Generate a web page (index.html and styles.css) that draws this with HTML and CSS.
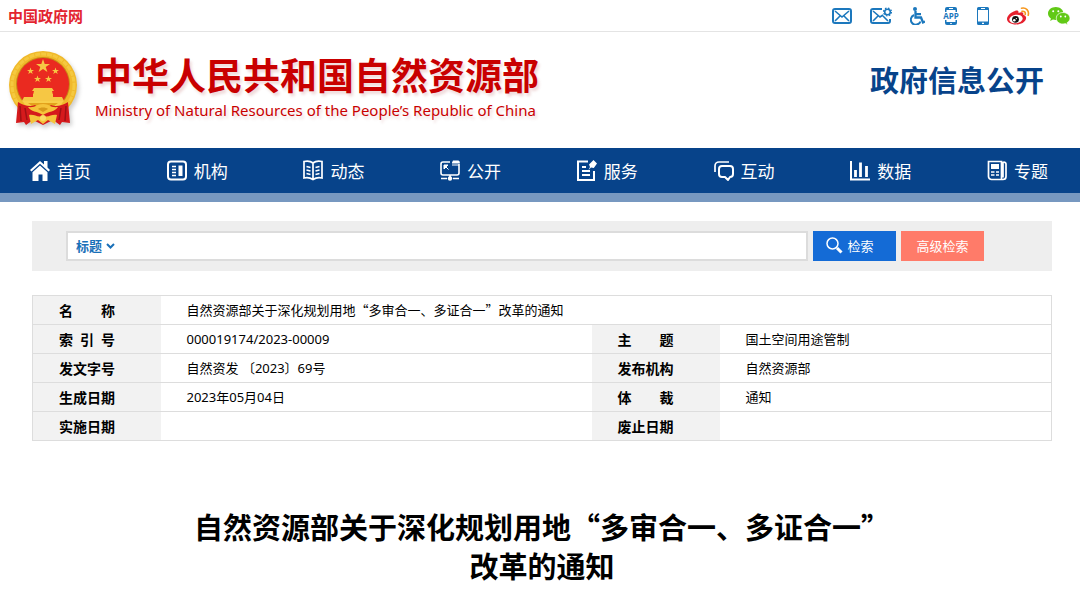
FILE: index.html
```html
<!DOCTYPE html>
<html lang="zh-CN">

<head>
    <meta charset="utf-8">
    <meta name="viewport" content="width=device-width, initial-scale=1">
    <title>自然资源部关于深化规划用地“多审合一、多证合一”改革的通知</title>
    <link rel="stylesheet" href="styles.css">
</head>

<body>
    <div class="topbar">
        <a class="gov-link" href="#">中国政府网</a>
        <div class="tools">
            <a href="#" aria-label="邮箱">
                <svg width="20" height="16" viewBox="0 0 20 16" fill="none" stroke="#1c78bd" stroke-width="2">
                    <rect x="1" y="1" width="18" height="14" rx="2" />
                    <path d="M3 3l7 6 7-6M3 13l5-5M17 13l-5-5" stroke-width="1.6" />
                </svg>
            </a>
            <a href="#" aria-label="邮件订阅">
                <svg width="22" height="17" viewBox="0 0 22 17" fill="none" stroke="#1c78bd" stroke-width="2">
                    <path d="M12 2H3a2 2 0 0 0-2 2v10a2 2 0 0 0 2 2h15a2 2 0 0 0 2-2v-2" />
                    <path d="M3 4l7 6 3-2M3 14l5-5M18 14l-5-5" stroke-width="1.6" />
                    <circle cx="17.5" cy="5" r="2.8" stroke-width="1.6" />
                    <circle cx="17.5" cy="5" r="3.9" stroke-width="1.3" stroke-dasharray="1.6 1.46" />
                </svg>
            </a>
            <a href="#" aria-label="无障碍">
                <svg width="15" height="18" viewBox="0 0 15 18" fill="none" stroke="#1c78bd" stroke-width="2">
                    <circle cx="5" cy="2" r="2" fill="#1c78bd" stroke="none" />
                    <path d="M5.500 4v6.500H11l2 5 2-1M6 7.200h5" stroke-width="2.300" />
                    <path d="M4 8a5 5 0 1 0 6.500 6.500" />
                </svg>
            </a>
            <a href="#" aria-label="APP">
                <svg width="16" height="18" viewBox="0 0 16 18" fill="#1c78bd">
                    <path d="M2 5V2a2 2 0 0 1 2-2h8a2 2 0 0 1 2 2v3h-1.500V3h-9v2zM2 13h1.500v2h9v-2H14v3a2 2 0 0 1-2 2H4a2 2 0 0 1-2-2z" />
                    <text x="8" y="12" text-anchor="middle" class="app-text">APP</text>
                    <path d="M6 1h4v1H6zM7.200 16h1.600v1H7.200z" fill="#fff" />
                </svg>
            </a>
            <a href="#" aria-label="手机版">
                <svg width="12" height="18" viewBox="0 0 12 18" fill="#1c78bd">
                    <path fill-rule="evenodd" d="M1.500 0h9A1.500 1.500 0 0 1 12 1.500v15a1.500 1.500 0 0 1-1.500 1.500h-9A1.500 1.500 0 0 1 0 16.500v-15A1.500 1.500 0 0 1 1.500 0zM1 3v11.500h10V3z" />
                    <path d="M4 1h4v1H4zM5 15.700h2v1.200H5z" fill="#fff" />
                </svg>
            </a>
            <a href="#" aria-label="微博">
                <svg width="23" height="18" viewBox="0 0 23 18">
                    <path d="M8 4c2-1 4-.5 3.500 2 3-1.300 5.500-.7 4.700 1.700 2 .6 3.300 2 2.800 4C18.300 15 14 17.500 9 17.500c-5 0-9-2.300-9-5.500C0 8.500 4.500 5 8 4z" fill="#e6202e" />
                    <ellipse cx="9" cy="12" rx="6.700" ry="4.300" fill="#fff" transform="rotate(-8 9 12)" />
                    <circle cx="8.500" cy="12.300" r="3.400" fill="#111" />
                    <circle cx="7.300" cy="13.200" r="1.300" fill="#fff" />
                    <circle cx="9.400" cy="11.600" r=".7" fill="#fff" />
                    <path d="M14.500 1.200c4.500-1 8 2.500 6.700 7M15 4.300c2.200-.5 3.800 1.100 3.200 3.200" fill="none" stroke="#f7971d" stroke-width="1.600" stroke-linecap="round" />
                </svg>
            </a>
            <a href="#" aria-label="微信">
                <svg width="22" height="18" viewBox="0 0 22 18" fill="#61c916">
                    <path d="M7.800 0C3.500 0 0 2.800 0 6.400c0 2 1.100 3.800 2.900 5L2.200 14l2.700-1.400c1 .3 1.900.4 2.900.4 4.300 0 7.700-2.900 7.700-6.500S12.100 0 7.800 0z" />
                    <path d="M15 5.500c-3.900 0-6.700 2.500-6.700 5.700S11.100 17 15 17c.8 0 1.600-.1 2.300-.4l2.300 1.300-.6-2.100c1.800-1.100 3-2.700 3-4.600 0-3.200-3.200-5.700-7-5.700z" stroke="#fff" stroke-width=".7" />
                    <g fill="#fff">
                        <circle cx="5.200" cy="4.300" r="1" />
                        <circle cx="10.300" cy="4.300" r="1" />
                        <circle cx="12.800" cy="9.500" r=".9" />
                        <circle cx="17.300" cy="9.500" r=".9" />
                    </g>
                </svg>
            </a>
        </div>
    </div>

    <header class="header">
        <a class="brand" href="#">
            <svg class="emblem" width="70" height="76" viewBox="0 0 70 76">
                <circle cx="35" cy="35" r="34" fill="#f0b92b" />
                <circle cx="35" cy="35" r="31" fill="none" stroke="#f5c93f" stroke-width="3" stroke-dasharray="5 1" />
                <circle cx="35" cy="34" r="27" fill="#c98a16" />
                <circle cx="35" cy="34" r="26" fill="#ea2a20" />
                <g fill="#f6c744">
                    <path id="star" d="M35 9l1.700 5h5.300l-4.300 3.100 1.700 5-4.400-3.100-4.400 3.100 1.700-5L28 14h5.300z" />
                    <use href="#star" transform="translate(5 13) scale(.5)" />
                    <use href="#star" transform="translate(30 13) scale(.5)" />
                    <use href="#star" transform="translate(12 21) scale(.5)" />
                    <use href="#star" transform="translate(23 21) scale(.5)" />
                    <path d="M26 38h18l2 3H24zM26 41h18l1 4H25zM25 44h20v3H25zM16 47h38l2 4H14z" />
                </g>
                <path d="M14 51h42l-4 5H18z" fill="#f8ce49" />
                <path d="M20 53h30l-4 3H24z" fill="#e3a21c" />
                <path d="M10 52c6 4 13 5 17 3l8 7 8-7c4 2 11 1 17-3l2 21-8-1-2 3-7-5-10 5-10-5-7 5-2-3-8 1z" fill="#d51a1c" />
                <path d="M12 56l1 15M17 58l2 12M58 56l-1 15M53 58l-2 12" stroke="#9f1115" stroke-width="1.500" />
                <path d="M20 57c8 1 8-3 15-3s7 4 15 3c-3 5-9 4-15 8-6-4-12-3-15-8z" fill="#f5c33a" />
                <path d="M30 59c2-2 8-2 10 0l-5 3z" fill="#d89a1a" />
                <path d="M21 65c6-1 8 3 14 1 6 2 8-2 14-1l-2 9-7-4-5 4-5-4-7 4z" fill="#f4c53c" />
                <circle cx="35" cy="68" r="3" fill="#f9dc66" />
            </svg>
            <span class="brand-text">
                <strong>中华人民共和国自然资源部</strong>
                <span class="brand-en">Ministry of Natural Resources of the People’s Republic of China</span>
            </span>
        </a>
        <a class="section-name" href="#">政府信息公开</a>
    </header>

    <nav class="nav">
        <a href="#">
            <svg width="20" height="21" viewBox="0 0 20 21" fill="#fff">
                <path d="M10 1l4 3.500V1h3.500v6.500L20 10l-1.500 1.500L10 3.800l-8.500 7.700L0 10z" />
                <path d="M10 5.500l7.500 6.700V21H12.500v-6.500h-4V21h-6v-8.800z" />
            </svg>
            首页
        </a>
        <a href="#">
            <svg width="20" height="21" viewBox="0 0 20 21" fill="none" stroke="#fff" stroke-width="2">
                <rect x="1" y="1.500" width="18" height="18" rx="3" />
                <path d="M5 6.500h4M5 9.500h4M5 12.500h4M5 15.500h4" stroke-width="1.500" />
                <path d="M13.500 5.500v10.500" stroke-width="4" />
            </svg>
            机构
        </a>
        <a href="#">
            <svg width="20" height="21" viewBox="0 0 20 21" fill="none" stroke="#fff" stroke-width="1.700">
                <path d="M10 3C7.500 1 4 .8 1 1.500v16.500c3-.7 6-.5 9 1.500 3-2 6-2.200 9-1.500V1.500C16 .8 12.500 1 10 3zM10 3v16" />
                <path d="M3.500 6.500l4 1M3.500 10l4 1M3.500 13.500l4 1M16.500 6.500l-4 1M16.500 10l-4 1M16.500 13.500l-4 1" stroke-width="1.500" />
            </svg>
            动态
        </a>
        <a href="#">
            <svg width="20" height="21" viewBox="0 0 20 21" fill="none" stroke="#fff" stroke-width="1.600">
                <path d="M10 2H3a2 2 0 0 0-2 2v9a2 2 0 0 0 2 2h14a2 2 0 0 0 2-2V4M10 15v3M1 18.500h6M13 18.500h6" />
                <path d="M12 2.500l1-2h5.500l1.300 1.200V3.500H12z" fill="#fff" stroke="none" />
                <path d="M12 5h7" stroke-width="1" />
                <path d="M4 9V5h4zM5.500 6.500l3 3" fill="#fff" stroke-width="1" />
                <circle cx="10" cy="18.500" r="2.200" fill="#fff" stroke="none" />
            </svg>
            公开
        </a>
        <a href="#">
            <svg width="20" height="21" viewBox="0 0 20 21" fill="none" stroke="#fff" stroke-width="2">
                <path d="M11 1.500H1v18.500h16V11" />
                <path d="M5 7h4M5 11h8M5 15h8" stroke-width="1.800" />
                <path d="M16.500 0L20 3.500 16.800 8 14 7.500 11.500 10 13 7l-1-2.500z" fill="#fff" stroke="none" />
            </svg>
            服务
        </a>
        <a href="#">
            <svg width="20" height="21" viewBox="0 0 20 21" fill="none" stroke="#fff" stroke-width="2" stroke-linejoin="round">
                <path d="M1 12V6a4 4 0 0 1 4-4h10" stroke-width="1.700" />
                <path d="M8 6h8a3 3 0 0 1 3 3v5a3 3 0 0 1-3 3l-2 3-3-3H8a3 3 0 0 1-3-3V9a3 3 0 0 1 3-3z" />
            </svg>
            互动
        </a>
        <a href="#">
            <svg width="20" height="21" viewBox="0 0 20 21" fill="none" stroke="#fff" stroke-width="2">
                <path d="M1 1v18.500h20" />
                <path d="M5.500 10v7M10.500 2.500v14.500M16.500 6v11" stroke-width="2.800" />
            </svg>
            数据
        </a>
        <a href="#">
            <svg width="20" height="21" viewBox="0 0 20 21" fill="none" stroke="#fff" stroke-width="2">
                <path d="M1.500 1.500h13V19.500h-10a3 3 0 0 1-3-3zM14 19.500h2a3 3 0 0 0 3-3V4.500a2 2 0 0 0-3-2v15" stroke-width="1.700" />
                <path d="M4 4h8v5H4z" fill="#fff" stroke="none" />
                <path d="M4 12h3.500M9 12h3M4 15h3.500M9 15h3" stroke-width="1.500" />
            </svg>
            专题
        </a>
    </nav>

    <main class="main">
        <form class="search">
            <div class="search-box">
                <select class="search-type" aria-label="检索范围">
                    <option>标题</option>
                    <option>正文</option>
                </select>
                <svg class="arrow" width="9" height="6" viewBox="0 0 9 6" fill="none" stroke="#1a70b8" stroke-width="2">
                    <path d="M1 1l3.500 3.500L8 1" />
                </svg>
                <input class="search-input" type="text" aria-label="检索词">
            </div>
            <button class="btn btn-search" type="submit">
                <svg width="17" height="17" viewBox="0 0 17 17" fill="none" stroke="#fff">
                    <circle cx="6.500" cy="6.500" r="5.500" stroke-width="1.500" />
                    <path d="M11 11l4.500 4.500" stroke-width="3" />
                </svg>
                检索
            </button>
            <button class="btn btn-advanced" type="button">高级检索</button>
        </form>

        <table class="info">
            <colgroup>
                <col class="col-label">
                <col class="col-wide">
                <col class="col-label">
                <col>
            </colgroup>
            <tr>
                <th scope="row">名　　称</th>
                <td colspan="3">自然资源部关于深化规划用地“多审合一、多证合一”改革的通知</td>
            </tr>
            <tr>
                <th scope="row">索&ensp;引&ensp;号</th>
                <td class="num">000019174/2023-00009</td>
                <th scope="row">主　　题</th>
                <td>国土空间用途管制</td>
            </tr>
            <tr>
                <th scope="row">发文字号</th>
                <td class="num">自然资发 〔2023〕69号</td>
                <th scope="row">发布机构</th>
                <td>自然资源部</td>
            </tr>
            <tr>
                <th scope="row">生成日期</th>
                <td class="num">2023年05月04日</td>
                <th scope="row">体　　裁</th>
                <td>通知</td>
            </tr>
            <tr>
                <th scope="row">实施日期</th>
                <td></td>
                <th scope="row">废止日期</th>
                <td></td>
            </tr>
        </table>

        <h1>自然资源部关于深化规划用地“多审合一、多证合一”改革的通知</h1>
    </main>
</body>

</html>
```
FILE: styles.css
```css
* {
    box-sizing: border-box;
}

body {
    margin: 0;
    background: #fff;
    color: #000;
    font-family: "Noto Sans CJK SC", sans-serif;
    font-size: 13px;
}

a {
    color: inherit;
    text-decoration: none;
}

svg {
    display: block;
    flex: none;
}

/* Top bar */
.topbar {
    display: flex;
    justify-content: space-between;
    align-items: center;
    height: 32px;
    padding: 0 10px 0 8px;
    border-bottom: 1px solid #e4e4e4;
}

.gov-link {
    color: #e3242f;
    font-size: 15px;
    font-weight: 700;
    line-height: 20px;
}

.tools {
    display: flex;
    align-items: center;
    gap: 18px;
}

.app-text {
    font-family: "Open Sans", sans-serif;
    font-size: 8px;
    font-weight: 700;
}

/* Header */
.header {
    display: flex;
    justify-content: space-between;
    align-items: flex-start;
    height: 116px;
    padding: 18px 36px 0 8px;
}

.brand {
    display: flex;
    align-items: flex-start;
    gap: 17px;
    color: #c90000;
}

.emblem {
    filter: drop-shadow(2px 3px 2px rgba(0, 0, 0, 0.2));
}

.brand-text {
    display: flex;
    flex-direction: column;
    text-shadow: 2px 3px 3px rgba(150, 0, 0, 0.15);
}

.brand-text strong {
    font-size: 37px;
    line-height: 48px;
}

.brand-en {
    font-family: "Noto Sans", sans-serif;
    font-size: 15px;
    line-height: 24px;
}

.section-name {
    margin-top: 10px;
    color: #07438a;
    font-size: 29px;
    font-weight: 700;
    line-height: 39px;
}

/* Navigation */
.nav {
    display: flex;
    justify-content: space-between;
    align-items: center;
    height: 54px;
    padding: 0 32px 0 30px;
    background: #07438a;
    border-bottom: 9px solid #7798c0;
    color: #fff;
    font-size: 17px;
    line-height: 24px;
}

.nav a {
    display: flex;
    align-items: center;
    gap: 7px;
}

/* Search */
.main {
    padding: 19px 28px 0 32px;
}

.search {
    display: flex;
    gap: 5px;
    padding: 10px 68px 10px 34px;
    background: #eee;
}

.search-box {
    display: flex;
    flex: 1;
    align-items: center;
    height: 30px;
    border: 2px solid #dcdcdc;
    background: #fff;
}

.search-type {
    appearance: none;
    width: 38px;
    height: 26px;
    padding: 0 0 2px 8px;
    border: 0;
    background: none;
    color: #1a70b8;
    font-family: inherit;
    font-size: 13px;
    font-weight: 700;
}

.search-input {
    flex: 1;
    height: 26px;
    padding: 0 8px;
    border: 0;
    outline: 0;
    background: none;
    font: inherit;
}

.btn {
    display: flex;
    justify-content: center;
    align-items: center;
    gap: 4px;
    width: 83px;
    height: 30px;
    padding: 0 0 2px;
    border: 0;
    color: #fff;
    font-family: inherit;
    font-size: 13px;
}

.btn-search {
    padding-right: 9px;
    background: #146bd6;
}

.btn-advanced {
    background: #ff7b69;
}

/* Document info */
.info {
    width: 100%;
    margin-top: 24px;
    border: 1px solid #ddd;
    border-collapse: collapse;
    table-layout: fixed;
}

.col-label {
    width: 128px;
}

.col-wide {
    width: 431px;
}

.info tr {
    height: 29px;
    border-bottom: 1px solid #ddd;
}

.info th,
.info td {
    padding: 0 0 0 26px;
    line-height: 20px;
    text-align: left;
}

.info th {
    background: #f2f2f2;
    font-size: 14px;
}

.info .num {
    font-family: "Noto Sans", "Noto Sans CJK SC", sans-serif;
}

/* Title */
h1 {
    max-width: 720px;
    margin: 66px auto 0;
    font-size: 29px;
    line-height: 39px;
    text-align: center;
}
```
